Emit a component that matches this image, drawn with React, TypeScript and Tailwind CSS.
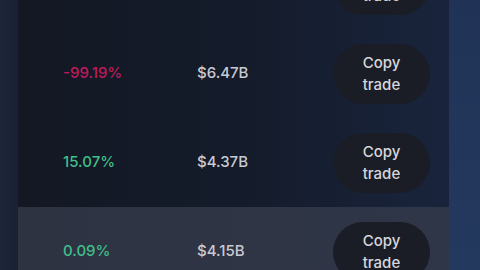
const rows = [
  { pct: "", color: "", value: "", hidden: true },
  { pct: "-99.19%", color: "text-[#c0195c]", value: "$6.47B" },
  { pct: "15.07%", color: "text-[#3fbf8a]", value: "$4.37B" },
  { pct: "0.09%", color: "text-[#3fbf8a]", value: "$4.15B", highlight: true },
];

function CopyButton() {
  return (
    <button className="flex h-[60px] w-[97px] flex-col items-center justify-center rounded-full bg-[#1b1d26] text-[15px] font-medium leading-[22px] text-[#d6d7dc]">
      <span>Copy</span>
      <span>trade</span>
    </button>
  );
}

export default function App() {
  return (
    <div
      className="flex h-[270px] w-[480px] overflow-hidden bg-[#1b2437]"
      style={{ fontFamily: "Inter, 'Noto Sans', sans-serif" }}
    >
      <div className="w-[18px] shrink-0 bg-gradient-to-r from-[#1d2639] to-[#192133]" />
      <div className="mt-[-60px] flex w-[431px] shrink-0 flex-col bg-gradient-to-r from-[#131823] via-[#141b2a] to-[#19243c]">
        {rows.map((row, i) => (
          <div
            key={i}
            className={
              row.highlight
                ? "flex h-[89px] shrink-0 items-center bg-gradient-to-r from-[#2e3342] to-[#2f3647] pl-[45px] pr-[19px]"
                : "flex h-[89px] shrink-0 items-center pl-[45px] pr-[19px]"
            }
          >
            <span className={`w-[134px] text-[15px] font-medium ${row.color}`}>{row.pct}</span>
            <span className="flex-1 text-[15px] font-medium text-[#c9cad1]">{row.value}</span>
            <CopyButton />
          </div>
        ))}
      </div>
      <div className="flex-1 bg-gradient-to-b from-[#203357] to-[#24395e]" />
    </div>
  );
}
